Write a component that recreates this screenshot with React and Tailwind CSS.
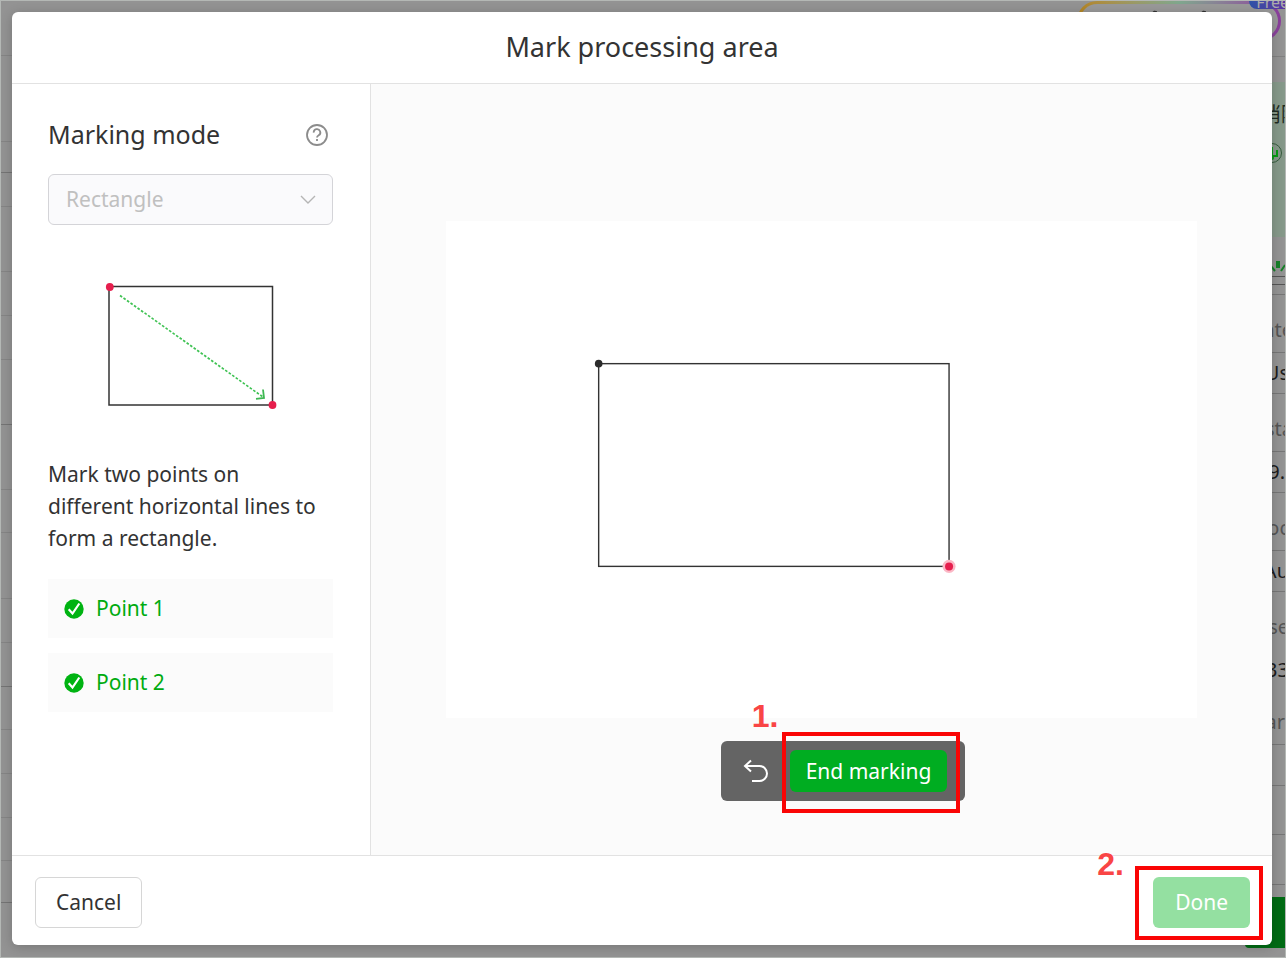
import React, { useState } from 'react';

const POINTS = ['Point 1', 'Point 2'];

// Rows of the page that stays visible on both sides of the dialog
const LEFT_ROWS = [
  'h-[55px]', 'h-[86px]', 'h-[31px]', 'h-[34px]', 'h-[65px]', 'h-[44px]', 'h-[44px]',
  'h-[65px]', 'h-[65px]', 'h-[43px]', 'h-[66px]', 'h-[44px]', 'h-[44px]', 'h-[43px]',
  'h-[44px]', 'h-[44px]', 'h-[43px]', 'h-[42px]',
];

const RIGHT_ROWS = [
  { height: 'h-[8px]', tone: 'border-[#555]' },
  { height: 'h-[10px]' },
  { height: 'h-[58px]', label: 'nte', muted: true, pull: '-mr-2' },
  { height: 'h-[41px]', label: 'Us', pull: '-mr-1' },
  { height: 'h-[58px]', label: 'sta', muted: true, pull: '-mr-2' },
  { height: 'h-[41px]', label: '9.' },
  { height: 'h-[58px]', label: 'oc', muted: true, pull: '-mr-1' },
  { height: 'h-[41px]', label: 'Au', pull: '-mr-1' },
  { height: 'h-[58px]', label: 'se', muted: true, tone: 'border-transparent', pull: '-mr-1' },
  { height: 'h-[41px]', label: '33', tone: 'border-transparent', pull: '-mr-1' },
  { height: 'h-[54px]', label: 'ar', muted: true },
  { height: 'h-[41px]' },
  { height: 'h-[49px]' },
  { height: 'h-[50px]' },
];

const HelpIcon = () => (
  <svg width="24" height="24" viewBox="0 0 24 24" fill="none" stroke="#8c8c8c" strokeWidth="1.8">
    <circle cx="12" cy="12" r="10" />
    <path d="M8.700 9.600a3.300 3.300 0 1 1 5 2.700c-1.100.7-1.700 1.200-1.700 2.300" />
    <path d="M12 16v2" />
  </svg>
);

const ChevronIcon = () => (
  <svg width="16" height="10" viewBox="0 0 16 10" fill="none" stroke="#b5b5b5" strokeWidth="1.4">
    <path d="M1 1l7 7 7-7" />
  </svg>
);

const CheckIcon = () => (
  <svg width="20" height="20" viewBox="0 0 20 20" fill="none">
    <circle cx="10" cy="10" r="9.7" fill="#00b312" />
    <path d="M4.700 10.300l3.800 4.200 6.800-10" stroke="#fff" strokeWidth="2.2" />
  </svg>
);

const UndoIcon = () => (
  <svg width="26" height="24" viewBox="0 0 26 24" fill="none" stroke="#fff" strokeWidth="2">
    <path d="M8 1.500L2 7l6 5.500" />
    <path d="M2 7h14.500a7.500 7.500 0 0 1 0 15H9" />
  </svg>
);

const ModeIllustration = () => (
  <svg width="174" height="129" viewBox="0 0 174 129" fill="none" className="mx-auto">
    <rect x="5" y="5.500" width="163.500" height="118.500" stroke="#333" strokeWidth="1.500" />
    <path d="M16 14.500L159 116" stroke="#3fc253" strokeWidth="1.700" strokeDasharray="2.600 1.700" />
    <path d="M159 108.500l1 8.500-8 .8" stroke="#3fb753" strokeWidth="1.800" />
    <circle cx="5.800" cy="6" r="3.900" fill="#e61e4d" />
    <circle cx="168.500" cy="124" r="3.900" fill="#e61e4d" />
  </svg>
);

const MarkingCanvas = () => (
  <svg viewBox="0 0 750 497" fill="none" className="w-5/6 bg-white">
    <rect x="152.500" y="142.500" width="350" height="202.500" stroke="#333" strokeWidth="1.400" />
    <circle cx="152.500" cy="142.500" r="3.800" fill="#2b2b2b" />
    <circle cx="502.500" cy="345" r="6.500" fill="#fbb8c6" />
    <circle cx="502.500" cy="345" r="4" fill="#e61e4d" />
  </svg>
);

const Backdrop = () => (
  <div aria-hidden="true" className="absolute inset-0 flex justify-between overflow-hidden border border-[#b4b8b5] bg-[#939393]">
    <div className="w-3 shrink-0">
      {LEFT_ROWS.map((height, i) => (
        <div key={i} className={`${height} border-b ${i % 5 === 2 ? 'border-[#747474]' : 'border-[#858585]'}`} />
      ))}
    </div>

    <div className="flex w-52 shrink-0 flex-col items-end">
      <div className="relative h-[55px] w-full shrink-0">
        <div className="mr-1 h-10 rounded-full bg-linear-to-r from-[#b5851d] via-[#7fa78d] to-[#8a3c9c] p-[3px]">
          <div className="flex h-full justify-center gap-11 rounded-full bg-[#999] pt-[6px]">
            <svg width="5" height="4" viewBox="0 0 5 4"><path d="M1 4c0-3 2-3 4-2" fill="none" stroke="#333" strokeWidth="1.500" /></svg>
            <svg width="5" height="4" viewBox="0 0 5 4"><path d="M1 4c0-3 2-3 4-2" fill="none" stroke="#333" strokeWidth="1.500" /></svg>
          </div>
        </div>
        <span className="absolute top-0 right-0 flex h-2 w-9 items-end justify-end overflow-hidden rounded-bl-lg bg-linear-to-r from-[#2b53a8] to-[#5a35a0] text-base leading-3 text-[#aaa]">
          <span className="-mr-1 pb-px">Free</span>
        </span>
      </div>
      <div className="h-[26px] w-full shrink-0 border-t border-[#808080]" />
      <div className="flex h-[155px] w-full shrink-0 flex-col items-end bg-[#86998a] pt-[21px]">
        <span className="-mr-4 flex h-6 items-center text-xl text-[#1f2b22]">消除</span>
        <svg width="22" height="22" viewBox="0 0 22 22" fill="none" className="mt-4 mr-[2px]">
          <circle cx="11" cy="10" r="9.500" stroke="#355c3c" />
          <path d="M11 16V4M11 13h5V7M11 12H7V8" stroke="#079a12" strokeWidth="2" />
          <circle cx="11" cy="15" r="2" fill="#079a12" />
        </svg>
      </div>
      <div className="flex h-10 w-full shrink-0 items-end justify-end border-b border-[#555] pb-1">
        <svg width="16" height="12" viewBox="0 0 16 12" fill="none" stroke="#167f28" strokeWidth="2">
          <path d="M1 5l5 6M16 5l-4 6" />
          <path d="M9 1v7" strokeWidth="4" />
        </svg>
      </div>
      {RIGHT_ROWS.map(({ height, label, muted, tone, pull }, i) => (
        <div
          key={i}
          className={`flex w-full shrink-0 justify-end border-b text-xl ${height} ${tone || 'border-[#767676]'} ${
            muted ? 'items-end pb-2 text-[#555]' : 'items-center text-[#1c1c1c]'
          }`}
        >
          {label && <span className={`leading-7 ${pull || ''}`}>{label}</span>}
        </div>
      ))}
      <div className="mt-3 h-[51px] w-10 shrink-0 rounded-l bg-[#006b14]" />
    </div>
  </div>
);

const App = () => {
  const [mode, setMode] = useState('rectangle');

  return (
    <div className="relative h-screen overflow-hidden pt-3 pr-[14px] pb-[13px] pl-3 font-['Noto_Sans','Noto_Sans_CJK_SC',sans-serif] text-[#333]">
      <Backdrop />

      <div
        role="dialog"
        aria-labelledby="dialog-title"
        className="relative flex h-full flex-col rounded-md bg-white shadow-[0_2px_12px_rgba(0,0,0,0.2)]"
      >
        <header className="flex h-[72px] shrink-0 items-center justify-center border-b border-[#e2e2e2]">
          <h1 id="dialog-title" className="text-[27px]">Mark processing area</h1>
        </header>

        <div className="flex min-h-0 flex-1">
          <aside className="w-[359px] shrink-0 border-r border-[#e2e2e2] pt-8 pr-[37px] pl-9">
            <div className="flex h-[38px] items-center justify-between">
              <label htmlFor="marking-mode" className="text-[25px]">Marking mode</label>
              <button type="button" aria-label="Help" className="mr-1">
                <HelpIcon />
              </button>
            </div>

            <div className="relative mt-5">
              <select
                id="marking-mode"
                value={mode}
                onChange={(e) => setMode(e.target.value)}
                disabled
                className="h-[51px] w-full appearance-none rounded-md border border-[#d4d4d8] bg-[#fafafc] px-[17px] text-[21px] text-[#c0c0c0] opacity-100"
              >
                <option value="rectangle">Rectangle</option>
              </select>
              <span className="pointer-events-none absolute inset-y-0 right-[17px] flex items-center">
                <ChevronIcon />
              </span>
            </div>

            <div className="mt-14">
              <ModeIllustration />
            </div>

            <p className="mt-12 pr-2 text-[21px] leading-8">
              Mark two points on different horizontal lines to form a rectangle.
            </p>

            <ul className="mt-[25px] flex flex-col gap-[15px]">
              {POINTS.map((point) => (
                <li key={point} className="flex h-[59px] items-center gap-3 bg-[#fbfbfb] px-4 text-[21px] text-[#00ab10]">
                  <CheckIcon />
                  {point}
                </li>
              ))}
            </ul>
          </aside>

          <main className="flex min-w-0 flex-1 flex-col items-center bg-[#fbfbfb]">
            <div className="flex-1" />
            <MarkingCanvas />
            <div className="flex-1">
              <div className="mt-[23px] ml-[43px] flex h-[60px] items-center rounded-md bg-[#646464] pr-[18px] pl-[22px]">
                <button type="button" aria-label="Undo">
                  <UndoIcon />
                </button>
                <div className="relative ml-[21px]">
                  <button type="button" className="block h-[42px] rounded-md bg-[#00ad21] px-4 text-[21px] text-white">
                    End marking
                  </button>
                  <span className="pointer-events-none absolute -top-[18px] -right-[13px] -bottom-[21px] -left-2 border-4 border-[#fa0505]" />
                  <span className="absolute -top-[52px] -left-[38px] font-['Liberation_Sans',sans-serif] text-[32px] leading-9 font-bold text-[#f94545]">
                    1.
                  </span>
                </div>
              </div>
            </div>
          </main>
        </div>

        <footer className="flex h-[90px] shrink-0 items-center justify-between border-t border-[#e2e2e2] pt-1 pr-[22px] pl-[23px]">
          <button type="button" className="h-[51px] rounded-md border border-[#d6d6d6] bg-white px-5 text-[21px]">
            Cancel
          </button>
          <div className="relative">
            <button type="button" className="block h-[51px] rounded-md bg-[#94e0a1] px-[22px] text-[21px] text-white">
              Done
            </button>
            <span className="pointer-events-none absolute -top-[11px] -right-[13px] -bottom-3 -left-[18px] border-4 border-[#fa0505]" />
            <span className="absolute -top-[31px] -left-14 font-['Liberation_Sans',sans-serif] text-[32px] leading-9 font-bold text-[#f94545]">
              2.
            </span>
          </div>
        </footer>
      </div>
    </div>
  );
};

export default App;
